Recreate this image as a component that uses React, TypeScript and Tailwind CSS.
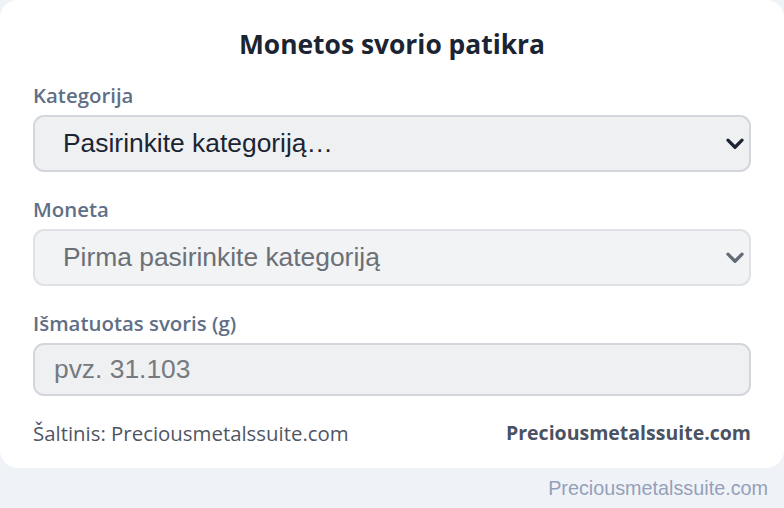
import React from "react";

const Chevron = ({ className }: { className: string }) => (
  <svg
    className={className}
    viewBox="0 0 18 12"
    fill="none"
    stroke="currentColor"
    strokeWidth={3}
    strokeLinecap="round"
    strokeLinejoin="round"
  >
    <path d="M2.5 2.5l6.5 6.5 6.5-6.5" />
  </svg>
);

const Label = ({ children }: { children: React.ReactNode }) => (
  <label className="block text-[20.4px] font-semibold text-[#5f6f86] mb-[7px] leading-[26px]">
    {children}
  </label>
);

export default function App() {
  return (
    <div className="min-h-[508px] bg-[#eff3f8] font-['Open_Sans',sans-serif]">
      {/* Card */}
      <div className="bg-white rounded-[18px] px-[33px] pt-[26px] pb-[22px]">
        <h1 className="text-center text-[26.4px] font-bold text-[#1b2433] leading-[36px] mb-[20px]">
          Monetos svorio patikra
        </h1>

        <div className="mb-[24px]">
          <Label>Kategorija</Label>
          <div className="relative">
            <select className="w-full appearance-none h-[57px] rounded-[11px] border-2 border-[#d3d6dc] bg-[#eff0f2] pl-[28px] pr-[48px] text-[26.4px] text-[#1b2433] font-['Liberation_Sans',sans-serif] outline-none">
              <option>Pasirinkite kategoriją…</option>
            </select>
            <Chevron className="pointer-events-none absolute right-[6px] top-1/2 -translate-y-1/2 w-[20px] h-[13px] text-[#1b2433]" />
          </div>
        </div>

        <div className="mb-[24px]">
          <Label>Moneta</Label>
          <div className="relative">
            <select
              disabled
              className="w-full appearance-none h-[57px] rounded-[11px] border-2 border-[#dfe1e5] bg-[#f2f3f5] pl-[28px] pr-[48px] text-[26.4px] text-[#6b6f76] font-['Liberation_Sans',sans-serif] outline-none"
            >
              <option>Pirma pasirinkite kategoriją</option>
            </select>
            <Chevron className="pointer-events-none absolute right-[6px] top-1/2 -translate-y-1/2 w-[20px] h-[13px] text-[#626a75]" />
          </div>
        </div>

        <div className="mb-[24px]">
          <Label>Išmatuotas svoris (g)</Label>
          <input
            placeholder="pvz. 31.103"
            className="w-full h-[53px] rounded-[11px] border-2 border-[#d3d6dc] bg-[#eff0f2] px-[19px] text-[26.4px] text-[#1b2433] placeholder:text-[#767a80] font-['Liberation_Sans',sans-serif] outline-none"
          />
        </div>

        <div className="flex items-center justify-between leading-[26px]">
          <span className="text-[20.4px] text-[#4f5663]">Šaltinis: Preciousmetalssuite.com</span>
          <span className="text-[19.5px] font-bold text-[#4a5263]">Preciousmetalssuite.com</span>
        </div>
      </div>

      <div className="flex justify-end pr-[16px] pt-[8px] text-[19.8px] leading-[24px] text-[#94a0b8] font-['Liberation_Sans',sans-serif]">
        Preciousmetalssuite.com
      </div>
    </div>
  );
}
